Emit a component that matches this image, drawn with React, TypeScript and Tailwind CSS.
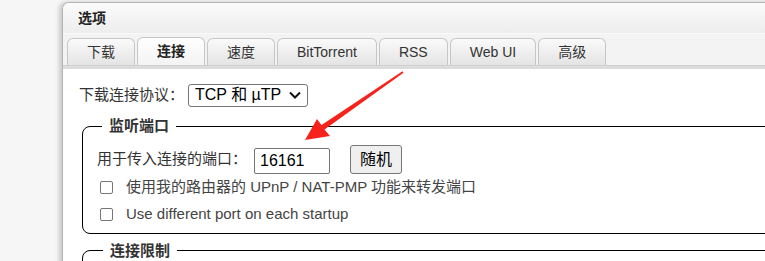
import React from 'react';

const tabs = ['下载', '连接', '速度', 'BitTorrent', 'RSS', 'Web UI', '高级'];

function Checkbox() {
  return <span className="block w-[13px] h-[13px] shrink-0 rounded-[2px] border border-[#767676] bg-white" />;
}

export default function App() {
  return (
    <div className="relative w-[765px] h-[261px] overflow-hidden bg-[#f6f6f6] font-['Liberation_Sans','Noto_Sans_CJK_SC',sans-serif] text-[14px] text-[#333]">
      {/* 窗口 */}
      <div className="ml-[62px] mt-[2px] w-[740px] h-[300px] rounded-tl-[7px] border-l border-t border-[#b4b4b4] bg-white shadow-[-3px_0_4px_rgba(0,0,0,0.18)] overflow-hidden">
        {/* 标题栏 */}
        <div className="h-[31px] flex items-center pl-[15px] font-bold text-[#222] bg-gradient-to-b from-[#fbfbfb] to-[#ededed] border-b border-[#fafafa]">
          选项
        </div>

        {/* 标签 */}
        <div className="bg-[#f3f3f3]">
          <div className="h-[31px] flex items-end gap-[2px] pl-[4px]">
            {tabs.map((t) => (
              <div
                key={t}
                className={
                  t === '连接'
                    ? 'h-[28px] px-[19px] flex items-center rounded-t-[6px] border border-b-0 border-[#c6c6c6] bg-gradient-to-b from-[#ffffff] to-[#f3f3f3] font-bold text-[#222]'
                    : 'h-[27px] px-[19px] flex items-center rounded-t-[6px] border border-b-0 border-[#c6c6c6] bg-gradient-to-b from-[#fafafa] to-[#e4e4e4] text-[#333]'
                }
              >
                {t}
              </div>
            ))}
          </div>
          <div className="h-[4px] bg-[#dcdcdc] border-t border-[#d0d0d0]" />
        </div>

        {/* 内容 */}
        <div className="pl-[16px] pt-[14px] text-[15px]">
          <div className="flex items-center h-[24px]">
            <span className="w-[109px] shrink-0">下载连接协议：</span>
            <div className="w-[120px] h-[23px] flex items-center justify-between px-[6px] border border-[#767676] rounded-[3px] text-[16px] text-black">
              <span>TCP 和 µTP</span>
              <svg width="12" height="8" viewBox="0 0 12 8" fill="none" stroke="#111" strokeWidth="2">
                <path d="M1 1.5l5 5 5-5" />
              </svg>
            </div>
          </div>

          <fieldset className="ml-[3px] mt-[8px] w-[700px] border border-black rounded-[8px] pl-[14px] pb-[5px]">
            <legend className="ml-[5px] px-[7px] font-bold text-[#333]">监听端口</legend>
            <div className="flex items-center h-[30px] mt-[7px]">
              <span className="w-[157px] shrink-0">用于传入连接的端口：</span>
              <div className="w-[76px] h-[26px] mt-[2px] flex items-center pl-[5px] border border-[#767676] rounded-[2px] text-[16px] text-black">
                16161
              </div>
              <div className="ml-[20px] w-[52px] h-[29px] flex items-center justify-center bg-[#efefef] border border-[#767676] rounded-[3px] text-[16px] text-black">
                随机
              </div>
            </div>
            <div className="flex items-center h-[26px] pl-[3px] gap-[13px] text-[#444]">
              <Checkbox />
              <span>使用我的路由器的 UPnP / NAT-PMP 功能来转发端口</span>
            </div>
            <div className="flex items-center h-[27px] pl-[3px] gap-[13px] text-[#444]">
              <Checkbox />
              <span>Use different port on each startup</span>
            </div>
          </fieldset>

          <fieldset className="ml-[3px] mt-[6px] w-[700px] h-[60px] border border-black rounded-[8px]">
            <legend className="ml-[20px] px-[7px] font-bold text-[#333]">连接限制</legend>
          </fieldset>
        </div>
      </div>

      {/* 红色箭头标注 */}
      <svg className="absolute left-0 top-0 pointer-events-none" width="765" height="261">
        <polygon
          points="305,140 317,119 321.5,125 402.5,71.3 403.5,72.7 324.5,129.5 330,136"
          fill="#f5231c"
        />
      </svg>
    </div>
  );
}
